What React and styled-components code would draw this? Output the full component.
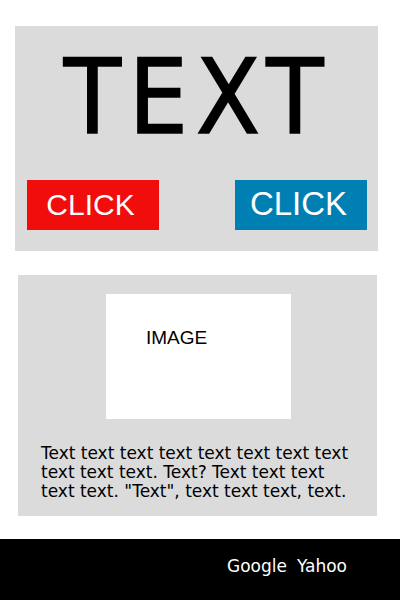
import React from 'react';
import styled, { createGlobalStyle } from 'styled-components';

const GlobalStyle = createGlobalStyle`
  html, body {
    margin: 0;
    padding: 0;
    background: #ffffff;
    font-family: "Liberation Sans", Arial, sans-serif;
  }
`;

const Page = styled.div`
  width: 400px;
  height: 600px;
  display: flex;
  flex-direction: column;
  overflow: hidden;
`;

const Hero = styled.section`
  margin: 26px 0 0 15px;
  width: 363px;
  height: 225px;
  background: #dbdbdb;
  display: flex;
  flex-direction: column;
  box-sizing: border-box;
  padding: 0 11px 0 12px;
`;

/* rounded display face isn't installed, condensed DejaVu + a thin stroke is the closest */
const Headline = styled.h1`
  margin: 11px 0 0;
  padding: 0 7px 0 8px;
  height: 121px;
  font-family: "DejaVu Sans Condensed", "DejaVu Sans", sans-serif;
  font-stretch: condensed;
  font-weight: 400;
  font-size: 104px;
  line-height: 121px;
  letter-spacing: 8px;
  text-align: center;
  color: #000;
  -webkit-text-stroke: 1.5px #000;
`;

const ButtonRow = styled.div`
  display: flex;
  justify-content: space-between;
  margin-top: 22px;
`;

const ClickButton = styled.button`
  width: 132px;
  height: 50px;
  border: none;
  padding: 0 5px ${p => p.$lift}px 0;
  background: ${p => p.$color};
  color: #fff;
  font-family: "Liberation Sans", Arial, sans-serif;
  font-size: ${p => p.$size}px;
  line-height: 1;
  text-align: center;
`;

const Card = styled.section`
  margin: 24px 0 0 18px;
  width: 359px;
  height: 241px;
  background: #dbdbdb;
  display: flex;
  flex-direction: column;
  align-items: center;
  box-sizing: border-box;
  padding-top: 19px;
`;

const ImageBox = styled.div`
  width: 185px;
  height: 125px;
  background: #fff;
  box-sizing: border-box;
  padding: 34px 0 0 40px;
  font-size: 19px;
  line-height: 1;
  color: #000;
  margin-left: 2px;
`;

const Paragraph = styled.p`
  align-self: stretch;
  margin: 25px 0 0;
  padding: 0 16px 0 23px;
  font-family: "DejaVu Sans", sans-serif;
  font-size: 17px;
  line-height: 19px;
  color: #000;
`;

const Footer = styled.footer`
  margin-top: 23px;
  height: 61px;
  background: #000;
  display: flex;
  justify-content: flex-end;
  align-items: center;
  gap: 10px;
  padding-right: 53px;
`;

const FooterLink = styled.a`
  color: #fff;
  font-family: "DejaVu Sans", sans-serif;
  font-size: 17px;
  text-decoration: none;
  margin-top: -7px;
`;

export default function App() {
  return (
    <Page>
      <GlobalStyle />
      <Hero>
        <Headline>TEXT</Headline>
        <ButtonRow>
          <ClickButton $color="#f20d0d" $size={30} $lift={0}>CLICK</ClickButton>
          <ClickButton $color="#007fb2" $size={33} $lift={4}>CLICK</ClickButton>
        </ButtonRow>
      </Hero>
      <Card>
        <ImageBox>IMAGE</ImageBox>
        <Paragraph>
          Text text text text text text text text text text text. Text? Text text text text text. "Text", text text text, text.
        </Paragraph>
      </Card>
      <Footer>
        <FooterLink>Google</FooterLink>
        <FooterLink>Yahoo</FooterLink>
      </Footer>
    </Page>
  );
}
